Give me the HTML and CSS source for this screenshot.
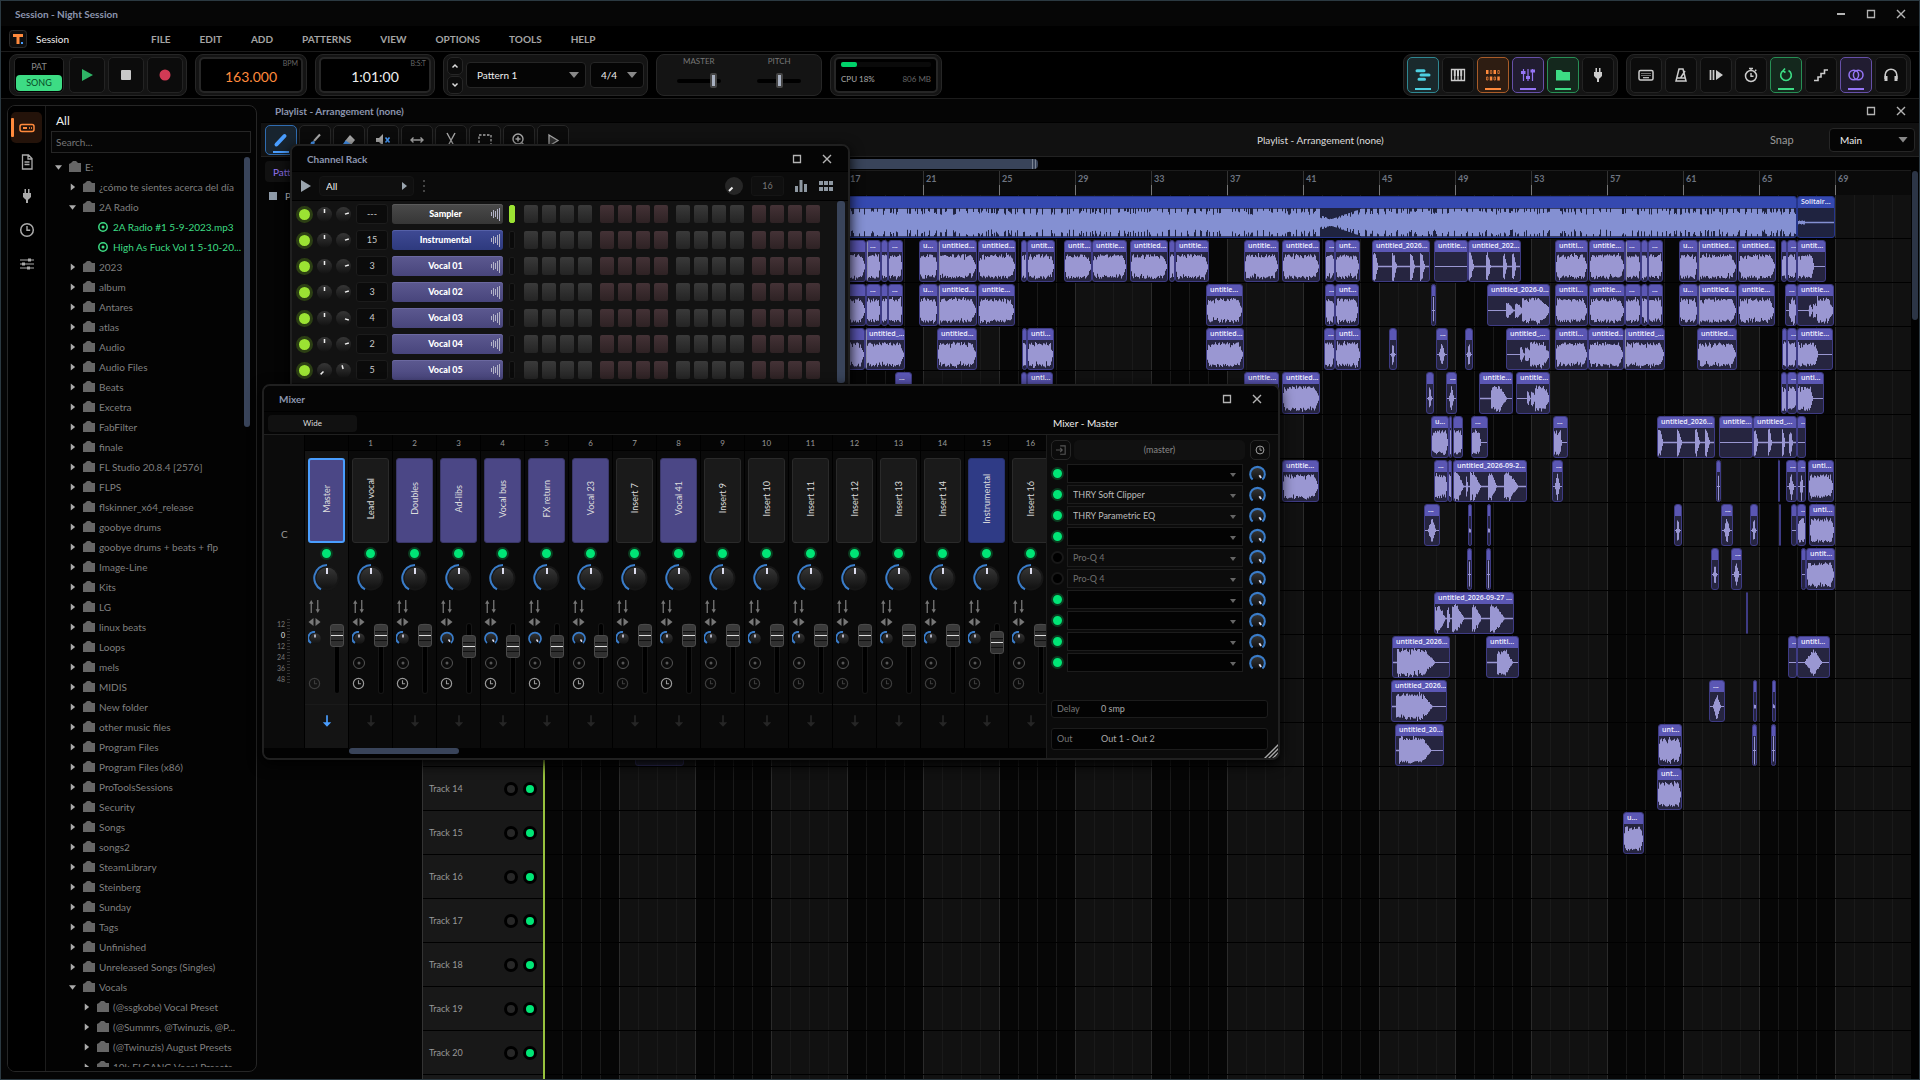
FILE: index.html
```html
<!DOCTYPE html>
<html lang="en">
<head>
<meta charset="utf-8">
<title>Session - Night Session</title>
<link rel="stylesheet" href="styles.css">
</head>
<body>
<svg class="sprite" aria-hidden="true">
  <symbol id="min" viewBox="0 0 12 12"><path d="M2 6h8" stroke="currentColor" stroke-width="2"/></symbol>
  <symbol id="max" viewBox="0 0 12 12"><path d="M2.5 2.5h7v7h-7z" fill="none" stroke="currentColor" stroke-width="1.3"/></symbol>
  <symbol id="close" viewBox="0 0 12 12"><path d="M2 2l8 8M10 2l-8 8" stroke="currentColor" stroke-width="1.4"/></symbol>
  <symbol id="folder" viewBox="0 0 12 12"><path d="M0 3l2-1 2-2h3l2 2h3v9H0z" fill="currentColor"/></symbol>
  <symbol id="right" viewBox="0 0 8 8"><path d="M2 0l5 4-5 4z" fill="currentColor"/></symbol>
  <symbol id="down" viewBox="0 0 8 8"><path d="M0 2h8L4 7z" fill="currentColor"/></symbol>
  <symbol id="disc" viewBox="0 0 12 12"><circle cx="6" cy="6" r="4.2" fill="none" stroke="currentColor" stroke-width="1.5"/><circle cx="6" cy="6" r="1.5" fill="currentColor"/></symbol>
  <symbol id="drive" viewBox="0 0 16 16"><rect x="1" y="4.500" width="14" height="7" rx="2" fill="none" stroke="currentColor" stroke-width="1.500"/><path d="M4 8h4M10 8h.8M12 8h.8" stroke="currentColor" stroke-width="1.800"/></symbol>
  <symbol id="file" viewBox="0 0 16 16"><path d="M3.500 1h6l3.500 3.500V15h-9.500zM9 1.500V5h3.500M5.500 8h5M5.500 10.500h5" fill="none" stroke="currentColor" stroke-width="1.300"/></symbol>
  <symbol id="plug" viewBox="0 0 16 16"><path d="M5.500 1h1.500v4h2V1h1.500v4h1.500v4l-2.500 2.500H9V15H7v-3.500h-.5L4 9V5h1.500z" fill="currentColor"/></symbol>
  <symbol id="clock" viewBox="0 0 16 16"><circle cx="8" cy="8" r="6.300" fill="none" stroke="currentColor" stroke-width="1.500"/><path d="M8 4v4.300h3.200" fill="none" stroke="currentColor" stroke-width="1.400"/></symbol>
  <symbol id="sliders" viewBox="0 0 16 16"><path d="M1 4h14M1 8h14M1 12h14" stroke="currentColor" stroke-width="1.200"/><path d="M9 2.500h3v3H9zM3 6.500h3v3H3zM8 10.500h3v3H8z" fill="currentColor"/></symbol>
  <symbol id="arrange" viewBox="0 0 16 16"><path d="M2 3.800h7M6 8h8M4 12.200h5.500" stroke="currentColor" stroke-width="3" stroke-linecap="round"/></symbol>
  <symbol id="piano" viewBox="0 0 16 16"><path d="M1.500 2.500h13v11h-13zM4.800 9v4.500M8 9v4.500M11.200 9v4.500" fill="none" stroke="currentColor" stroke-width="1.300"/><path d="M4.800 3v6M8 3v6M11.200 3v6" stroke="currentColor" stroke-width="2"/></symbol>
  <symbol id="seq" viewBox="0 0 16 16"><path d="M1 3h2.500v4H1zM8.500 3H11v4H8.500zM4.800 9.500h2.500v4H4.800zM12.300 9.500h2.500v4h-2.500z" fill="currentColor"/><path d="M5.300 3.500h1.500v3H5.300zM12.800 3.500h1.500v3h-1.500zM1.500 10H3v3H1.500zM9 10h1.500v3H9z" fill="none" stroke="currentColor" opacity=".7"/></symbol>
  <symbol id="faders" viewBox="0 0 16 16"><path d="M3.500 2v12M8 2v12M12.500 2v12" stroke="currentColor" stroke-width="1.200"/><path d="M1 4h4.500v3H1zM6 9h4v3H6zM10.500 2.500H15v3h-4.500z" fill="currentColor"/></symbol>
  <symbol id="browse" viewBox="0 0 16 16"><path d="M1 3h5l2 2h7v8.500H1z" fill="currentColor"/></symbol>
  <symbol id="keys" viewBox="0 0 16 16"><rect x="1" y="3.500" width="14" height="9.500" rx="1.500" fill="none" stroke="currentColor" stroke-width="1.500"/><path d="M3.500 6.500h9M3.500 8.500h9" stroke="currentColor" stroke-dasharray="1 1"/><path d="M5 10.700h6" stroke="currentColor" stroke-width="1.200"/></symbol>
  <symbol id="metro" viewBox="0 0 16 16"><path d="M6 2h4l3 12H3zM4 11h8M7.500 11L12 4" fill="none" stroke="currentColor" stroke-width="1.500"/></symbol>
  <symbol id="wait" viewBox="0 0 16 16"><path d="M2.500 3v10M5.500 3v10" stroke="currentColor" stroke-width="1.700"/><path d="M8 3l7 5-7 5z" fill="currentColor"/></symbol>
  <symbol id="timer" viewBox="0 0 16 16"><circle cx="8" cy="9" r="5.500" fill="none" stroke="currentColor" stroke-width="1.500"/><path d="M8 6v3.300h2.500M6 1.500h4M8 1.500v2M12 4l1.300-1.300" fill="none" stroke="currentColor" stroke-width="1.400"/></symbol>
  <symbol id="loop" viewBox="0 0 16 16"><path d="M10.500 3.500a5.300 5.300 0 1 1-5 0M7 1.500L5 3.800l2.500 1.700" fill="none" stroke="currentColor" stroke-width="1.600"/></symbol>
  <symbol id="stairs" viewBox="0 0 16 16"><path d="M1 13.500h4v-3.500h3V6.500h3.500V3H15" fill="none" stroke="currentColor" stroke-width="1.600"/></symbol>
  <symbol id="rings" viewBox="0 0 16 16"><circle cx="5.800" cy="8" r="4.800" fill="none" stroke="currentColor" stroke-width="1.500"/><circle cx="10.200" cy="8" r="4.800" fill="none" stroke="currentColor" stroke-width="1.500"/></symbol>
  <symbol id="phones" viewBox="0 0 16 16"><path d="M2.200 12V8a5.800 5.800 0 0 1 11.600 0v4" fill="none" stroke="currentColor" stroke-width="1.600"/><path d="M1.500 9h3v5h-3zM11.500 9h3v5h-3z" fill="currentColor"/></symbol>
  <symbol id="pencil" viewBox="0 0 16 16"><path d="M3.500 12.500L11.500 4" stroke="#4a9eff" stroke-width="4" stroke-linecap="round"/></symbol>
  <symbol id="brush" viewBox="0 0 16 16"><path d="M7 9l6-6.500" stroke="#aaa" stroke-width="2"/><path d="M3 14l1-4 3-1 1 2-2 2z" fill="#4a9eff"/></symbol>
  <symbol id="eraser" viewBox="0 0 16 16"><path d="M9 3l5 5-4 5-6-4z" fill="#aaa"/><path d="M4.500 8.500l6 4-1 2H4L2 12z" fill="#4a9eff"/></symbol>
  <symbol id="mute" viewBox="0 0 16 16"><path d="M1 6h3l4-4v12l-4-4H1z" fill="#aaa"/><path d="M10.500 5.500l4 5M14.500 5.500l-4 5" stroke="#4a9eff" stroke-width="1.600"/></symbol>
  <symbol id="slip" viewBox="0 0 16 16"><path d="M2 8h12M4.500 5.500L2 8l2.500 2.500M11.500 5.500L14 8l-2.500 2.500" fill="none" stroke="#aaa" stroke-width="1.400"/></symbol>
  <symbol id="slice" viewBox="0 0 16 16"><path d="M4 1l6.500 12M12 1L5.500 13" stroke="#aaa" stroke-width="1.400"/><circle cx="4" cy="13.500" r="1.500" fill="#aaa"/><circle cx="12" cy="13.500" r="1.500" fill="#aaa"/></symbol>
  <symbol id="marquee" viewBox="0 0 16 16"><path d="M2 3h12v10H2z" fill="none" stroke="#aaa" stroke-width="1.300" stroke-dasharray="2.500 1.500"/></symbol>
  <symbol id="lens" viewBox="0 0 16 16"><circle cx="7" cy="7" r="5" fill="none" stroke="#aaa" stroke-width="1.400"/><path d="M7 4.500v5M4.500 7h5M10.500 10.500L15 15" stroke="#aaa" stroke-width="1.500"/></symbol>
  <symbol id="listen" viewBox="0 0 16 16"><path d="M4 3l9 5.500-9 5.500z" fill="#333" stroke="#aaa" stroke-width="1.300"/></symbol>
  <symbol id="swap" viewBox="0 0 12 12"><path d="M3 2v10M9 0v10" stroke="currentColor" stroke-width="1.200"/><path d="M1 3.500L3 0l2 3.500zM7 8.500L9 12l2-3.500z" fill="currentColor"/></symbol>
  <symbol id="pan" viewBox="0 0 12 8"><path d="M5 0v8L0 4zM7 0v8l5-4z" fill="currentColor"/></symbol>
  <symbol id="rec" viewBox="0 0 14 14"><circle cx="7" cy="7" r="5.500" fill="none" stroke="currentColor"/><circle cx="7" cy="7" r="1.500" fill="currentColor"/></symbol>
  <symbol id="send" viewBox="0 0 12 16"><path d="M6 1v10" stroke="currentColor" stroke-width="2"/><path d="M1 9.500h10L6 15z" fill="currentColor"/></symbol>
  <symbol id="wave" viewBox="0 0 9 14"><path d="M.5 5v4M2.500 3v8M4.500 4v6M6.500 2v10M8.500 1v13" stroke="currentColor" stroke-width="1"/></symbol>
  <symbol id="dial" viewBox="0 0 28 28"><circle cx="14" cy="14" r="12.500" fill="#161616"/><circle cx="14" cy="14" r="10.500" fill="url(#kg)"/><path d="M8 25.400A13 13 0 0 1 14 1" fill="none" stroke="#3a7cc8" stroke-width="2"/><path d="M14 4v6" stroke="#dde" stroke-width="2"/></symbol>
  <symbol id="dialfull" viewBox="0 0 28 28"><circle cx="14" cy="14" r="10" fill="url(#kg)"/><path d="M6 24A12 12 0 1 1 22 24" fill="none" stroke="#3a7cc8" stroke-width="3.500"/><path d="M17 17l3 4.500" stroke="#dde" stroke-width="3"/></symbol>
  <symbol id="dialhalf" viewBox="0 0 28 28"><circle cx="15" cy="15" r="10.500" fill="url(#kg)"/><path d="M6 24A12 12 0 0 1 14 2" fill="none" stroke="#3a7cc8" stroke-width="4"/><path d="M14 7v6" stroke="#dde" stroke-width="3"/></symbol>
  <linearGradient id="kg" x2="0" y2="1"><stop stop-color="#363636"/><stop offset="1" stop-color="#121212"/></linearGradient>
</svg>

<div class="app">
  <header class="titlebar">
    <h1 class="wintitle">Session - Night Session</h1>
    <div class="winbtns">
      <button aria-label="Minimize"><svg><use href="#min"/></svg></button>
      <button aria-label="Maximize"><svg><use href="#max"/></svg></button>
      <button aria-label="Close"><svg><use href="#close"/></svg></button>
    </div>
  </header>

  <nav class="menubar">
    <svg class="logo" viewBox="0 0 18 18"><rect x=".5" y=".5" width="17" height="17" rx="3" fill="#0e0e0e" stroke="#2a2a2a"/><path d="M4 4h10v3h-3.500v7h-3V7H4z" fill="#ff8a3c"/><path d="M12 12h2v2h-2z" fill="#4a9eff"/></svg>
    <span class="project">Session</span>
    <button>FILE</button><button>EDIT</button><button>ADD</button><button>PATTERNS</button><button>VIEW</button><button>OPTIONS</button><button>TOOLS</button><button>HELP</button>
  </nav>

  <section class="transport">
    <div class="group">
      <div class="mode"><button>PAT</button><button class="on">SONG</button></div>
      <button class="key" aria-label="Play"><svg viewBox="0 0 16 16"><path d="M3 2l11 6-11 6z" fill="#2fb566"/></svg></button>
      <button class="key" aria-label="Stop"><svg viewBox="0 0 16 16"><rect x="3" y="3" width="10" height="10" rx="1" fill="#c8c8c8"/></svg></button>
      <button class="key" aria-label="Record"><svg viewBox="0 0 16 16"><circle cx="8" cy="8" r="5.500" fill="#d23a55"/></svg></button>
    </div>
    <div class="group"><div class="readout bpm"><small>BPM</small>163.000</div></div>
    <div class="group"><div class="readout time"><small>B:S:T</small>1:01:00</div></div>
    <div class="group pattern">
      <div class="updown"><button aria-label="Previous pattern"><svg viewBox="0 0 8 8"><path d="M1.500 5.500L4 3l2.500 2.500" fill="none" stroke="#ddd" stroke-width="1.500"/></svg></button><button aria-label="Next pattern"><svg viewBox="0 0 8 8"><path d="M1.500 2.500L4 5l2.500-2.500" fill="none" stroke="#ddd" stroke-width="1.500"/></svg></button></div>
      <div class="pick wide"><select aria-label="Pattern"><option>Pattern 1</option></select></div>
      <div class="pick sig"><select aria-label="Time signature"><option>4/4</option></select></div>
    </div>
    <div class="group levels">
      <label>MASTER<input type="range" min="0" max="100" value="90"></label>
      <label>PITCH<input type="range" min="0" max="100" value="50"></label>
    </div>
    <div class="group"><div class="cpu"><div class="load"><i></i></div><div class="stats"><span>CPU 18%</span><span class="mem">806 MB</span></div></div></div>
    <div class="group views">
      <button class="key cyan" aria-label="Playlist"><svg><use href="#arrange"/></svg></button>
      <button class="key" aria-label="Piano roll"><svg><use href="#piano"/></svg></button>
      <button class="key orange" aria-label="Channel rack"><svg><use href="#seq"/></svg></button>
      <button class="key purple" aria-label="Mixer"><svg><use href="#faders"/></svg></button>
      <button class="key green" aria-label="Browser"><svg><use href="#browse"/></svg></button>
      <button class="key" aria-label="Plugins"><svg><use href="#plug"/></svg></button>
    </div>
    <div class="group">
      <button class="key" aria-label="Typing keyboard"><svg><use href="#keys"/></svg></button>
      <button class="key" aria-label="Metronome"><svg><use href="#metro"/></svg></button>
      <button class="key" aria-label="Wait for input"><svg><use href="#wait"/></svg></button>
      <button class="key" aria-label="Countdown"><svg><use href="#timer"/></svg></button>
      <button class="key green" aria-label="Loop record"><svg><use href="#loop"/></svg></button>
      <button class="key" aria-label="Step edit"><svg><use href="#stairs"/></svg></button>
      <button class="key purple" aria-label="Overdub"><svg><use href="#rings"/></svg></button>
      <button class="key" aria-label="Monitor"><svg><use href="#phones"/></svg></button>
    </div>
  </section>

  <main class="desk">
    <aside class="browser">
      <div class="rail">
        <button class="on" aria-label="Drives"><svg><use href="#drive"/></svg></button>
        <button aria-label="Files"><svg><use href="#file"/></svg></button>
        <button aria-label="Plugins"><svg><use href="#plug"/></svg></button>
        <button aria-label="History"><svg><use href="#clock"/></svg></button>
        <button aria-label="Presets"><svg><use href="#sliders"/></svg></button>
      </div>
      <div class="files">
        <h2>All</h2>
        <input class="search" type="text" placeholder="Search..." aria-label="Search">
        <div class="treewrap"><ul class="tree" id="tree"></ul><div class="thumb"></div></div>
      </div>
    </aside>

    <section class="playlist">
      <header class="bar">
        <h2 class="wintitle">Playlist - Arrangement (none)</h2>
        <div class="winbtns"><button aria-label="Maximize"><svg><use href="#max"/></svg></button><button aria-label="Close"><svg><use href="#close"/></svg></button></div>
      </header>
      <div class="tools">
        <button class="on" aria-label="Draw"><svg><use href="#pencil"/></svg></button>
        <button aria-label="Paint"><svg><use href="#brush"/></svg></button>
        <button aria-label="Delete"><svg><use href="#eraser"/></svg></button>
        <button aria-label="Mute"><svg><use href="#mute"/></svg></button>
        <button aria-label="Slip"><svg><use href="#slip"/></svg></button>
        <button aria-label="Slice"><svg><use href="#slice"/></svg></button>
        <button aria-label="Select"><svg><use href="#marquee"/></svg></button>
        <button aria-label="Zoom"><svg><use href="#lens"/></svg></button>
        <button aria-label="Playback"><svg><use href="#listen"/></svg></button>
        <span class="caption">Playlist - Arrangement (none)</span>
        <label class="snap" for="snap">Snap</label>
        <div class="pick"><select id="snap"><option>Main</option></select></div>
      </div>
      <div class="arrange">
        <div class="picker"><button class="tab">Patterns</button><p><i></i>Pattern 1</p></div>
        <div class="heads" id="heads"></div>
        <div class="lanes">
          <div class="hscroll"><i></i></div>
          <div class="ruler" id="ruler"></div>
          <div class="grid" id="grid"><div class="playhead"></div></div>
        </div>
        <div class="vscroll"><i></i></div>
      </div>
    </section>
  </main>

  <section class="window rack">
    <header class="bar">
      <h2 class="wintitle">Channel Rack</h2>
      <div class="winbtns"><button aria-label="Maximize"><svg><use href="#max"/></svg></button><button aria-label="Close"><svg><use href="#close"/></svg></button></div>
    </header>
    <div class="racktools">
      <button class="play" aria-label="Play"><svg viewBox="0 0 10 12"><path d="M0 0l10 6-10 6z" fill="#9aa4ae"/></svg></button>
      <div class="pick side"><select aria-label="Filter"><option>All</option></select></div>
      <svg class="dots" viewBox="0 0 2 12"><path d="M0 0h2v2H0zM0 5h2v2H0zM0 10h2v2H0z" fill="#444"/></svg>
      <svg class="swing" viewBox="0 0 18 18"><circle cx="9" cy="9" r="9" fill="#262626"/><path d="M7.500 10.500L4 14" stroke="#eee" stroke-width="2"/></svg>
      <span class="count">16</span>
      <svg class="graph" viewBox="0 0 12 12"><path d="M0 6h3v6H0zM4.500 0h3v12h-3zM9 4h3v8H9z" fill="#8e98a2"/></svg>
      <svg class="graph" viewBox="0 0 14 12"><path d="M0 1h4v4H0zM5 1h4v4H5zM10 1h4v4h-4zM0 7h4v4H0zM5 7h4v4H5zM10 7h4v4h-4z" fill="#8e98a2"/></svg>
    </div>
    <div class="rackbody"><div id="channels"></div><div class="thumb"></div></div>
  </section>

  <section class="window mixer">
    <header class="bar">
      <h2 class="wintitle">Mixer</h2>
      <div class="winbtns"><button aria-label="Maximize"><svg><use href="#max"/></svg></button><button aria-label="Close"><svg><use href="#close"/></svg></button></div>
    </header>
    <div class="mixtools"><button>Wide</button><strong>Mixer - Master</strong></div>
    <div class="mixbody">
      <div class="console">
        <div class="striprow">
          <div class="scale"><b>C</b><ul><li>12</li><li class="zero">0</li><li>12</li><li>24</li><li>36</li><li>48</li></ul></div>
          <div class="strips" id="strips"></div>
        </div>
        <div class="mixscroll"><i></i></div>
      </div>
      <div class="inspector">
        <div class="source">
          <button aria-label="Input"><svg viewBox="0 0 12 12"><path d="M0 6h7M5 3.500L7.500 6 5 8.500M5 1h6v10H5" fill="none" stroke="#555" stroke-width="1.300"/></svg></button>
          <button class="input">(master)</button>
          <button aria-label="Latency"><svg><use href="#clock"/></svg></button>
        </div>
        <div id="slots"></div>
        <div class="field delay"><span>Delay</span>0 smp</div>
        <div class="field out"><span>Out</span>Out 1 - Out 2</div>
      </div>
    </div>
    <svg class="grip" viewBox="0 0 18 18"><path d="M1 18L18 1M5 18L18 5M9 18L18 9M13 18l5-5" stroke="#aaa" stroke-width="1.400"/></svg>
  </section>
</div>
<script src="app.js"></script>
</body>
</html>
```
FILE: styles.css
```css
* { box-sizing: border-box; }
body { margin: 0; background: #000; color: #ddd; font: 10px/14px Lato, "Open Sans", sans-serif; }
button, select, input { font: inherit; color: inherit; margin: 0; padding: 0; border: 0; background: none; }
h1, h2, p, ul { margin: 0; padding: 0; font: inherit; list-style: none; }
svg { display: block; width: 16px; height: 16px; }
.sprite { position: absolute; width: 0; height: 0; }
.app { position: relative; display: flex; flex-direction: column; height: 100vh; overflow: hidden; border: 1px solid #2b3941; background: #050505; }

.titlebar { display: flex; align-items: center; justify-content: space-between; height: 25px; flex: none; padding: 0 0 0 14px; background: #060606; }
.wintitle { font-size: 10px; font-weight: 700; color: #8c95ae; white-space: nowrap; }
.winbtns { display: flex; }
.winbtns button { width: 30px; height: 22px; display: grid; place-items: center; color: #b4b4b4; }
.winbtns svg { width: 12px; height: 12px; }
.titlebar .winbtns, .playlist .winbtns { padding-right: 3px; }

.menubar { display: flex; align-items: center; gap: 29px; height: 26px; flex: none; padding-left: 8px; background: #000; border-bottom: 1px solid #1c1c1c; color: #a4a4a4; }
.menubar button { font-size: 10px; font-weight: 700; }
.logo { width: 18px; height: 18px; margin-right: -20px; }
.project { width: 86px; font-size: 10px; color: #eee; }

.transport { display: flex; align-items: center; gap: 8px; height: 47px; flex: none; padding: 0 8px; background: #000; border-bottom: 1px solid #1c1c1c; }
.group { display: flex; align-items: center; gap: 3px; height: 42px; padding: 0 3px; border: 1px solid #262626; border-radius: 8px; background: #141414; }
.mode { width: 50px; height: 36px; margin: 0 2px 0 1px; padding: 1px; display: flex; flex-direction: column; border: 1px solid #262626; border-radius: 5px; background: #000; font-size: 9px; color: #888; text-align: center; }
.mode button { flex: 1; }
.mode .on { background: #3ddc84; color: #064a24; border-radius: 4px; }
.key { position: relative; width: 32px; height: 36px; display: grid; place-items: center; border: 1px solid #232323; border-radius: 5px; background: #0c0c0c; color: #ccc; }
.transport .group:first-child .key { width: 36px; }
.key.cyan { color: #4dd0e1; background: #1a292c; border-color: #2f8792; }
.key.orange { color: #ff8a3c; background: #2e1d12; border-color: #a95c28; }
.key.purple { color: #9575f5; background: #211c31; border-color: #6650a8; }
.key.green { color: #3ddc84; background: #14281d; border-color: #278f55; }
.key.cyan::after, .key.orange::after, .key.purple::after, .key.green::after { content: ""; position: absolute; left: 7px; right: 7px; bottom: 2px; height: 2px; background: currentColor; }
.readout { position: relative; height: 36px; width: 104px; border: 2px solid #262626; border-radius: 5px; background: #000; font-size: 14px; line-height: 35px; text-align: center; color: #eee; }
.readout.time { width: 112px; }
.readout.bpm { color: #ff8a3c; }
.readout small { position: absolute; right: 3px; top: 0; font-size: 7px; line-height: 8px; color: #666; }
.updown { display: flex; flex-direction: column; gap: 1px; }
.updown button { width: 16px; height: 18px; display: grid; place-items: center; border: 1px solid #262626; border-radius: 5px; background: #0c0c0c; }
.updown svg { width: 8px; height: 8px; }
.pick { position: relative; height: 26px; border: 1px solid #262626; border-radius: 4px; background: #050505; }
.pick select { appearance: none; width: 100%; height: 100%; padding-left: 10px; font-size: 10px; color: #eee; }
.pick::after { content: ""; position: absolute; right: 6px; top: calc(50% - 3px); width: 10px; height: 6px; background: #888; clip-path: polygon(0 0, 100% 0, 50% 100%); pointer-events: none; }
.pick.wide { width: 120px; }
.pick.sig { width: 54px; margin-left: 1px; }
.levels { width: 166px; align-items: flex-start; justify-content: space-around; }
.levels label { display: flex; flex-direction: column; align-items: center; gap: 6px; font-size: 8px; line-height: 12px; color: #777; }
.levels input { appearance: none; width: 44px; height: 16px; }
.levels input::-webkit-slider-runnable-track { height: 4px; border-radius: 2px; background: #000; }
.levels input::-webkit-slider-thumb { appearance: none; width: 7px; height: 15px; margin-top: -6px; border: 2px solid #444; border-radius: 2px; background: #a8b0c0; }
.cpu { width: 104px; height: 36px; padding: 3px 5px; border: 2px solid #262626; border-radius: 5px; background: #000; font-size: 8px; }
.load { height: 5px; margin-bottom: 5px; border-radius: 2px; background: #0a0a0a; }
.load i { display: block; width: 18%; height: 5px; border-radius: 2px; background: #00d26a; }
.stats { display: flex; justify-content: space-between; color: #aaa; white-space: nowrap; }
.mem { color: #666; }
.views { margin-left: auto; }

.desk { flex: 1; min-height: 0; display: flex; }
.browser { display: flex; width: 250px; margin: 6px 4px 7px 6px; border: 1px solid #262626; border-radius: 8px; background: #030303; overflow: hidden; }
.rail { width: 38px; padding: 6px 3px; border-right: 1px solid #1c1c1c; background: #000; display: flex; flex-direction: column; gap: 3px; color: #aaa; }
.rail button { position: relative; width: 31px; height: 31px; display: grid; place-items: center; border-radius: 5px; }
.rail .on { background: #24130a; color: #ff8a3c; }
.rail .on::before { content: ""; position: absolute; left: 0; top: 6px; width: 3px; height: 19px; border-radius: 1px; background: #ff8a3c; }
.files { flex: 1; min-width: 0; padding: 8px 5px 4px; display: flex; flex-direction: column; }
.files h2 { height: 17px; padding-left: 5px; font-size: 12px; color: #eee; }
.search { height: 22px; padding: 0 4px; border: 1px solid #262626; background: #060606; color: #aaa; }
.search::placeholder { color: #777; }
.treewrap { position: relative; flex: 1; min-height: 0; margin-top: 4px; overflow: hidden; }
.tree li { display: flex; align-items: center; height: 20px; padding-left: 4px; color: #808080; white-space: nowrap; }
.tree .d1 { padding-left: 18px; }
.tree .d2 { padding-left: 32px; }
.tree .file { padding-left: 46px; color: #3ddc84; }
.tree svg { width: 7px; height: 8px; margin-right: 7px; color: #aaa; flex: none; }
.tree svg.ic { width: 12px; height: 12px; margin-right: 4px; color: #666; }
.tree .file svg.ic { color: #3ddc84; }
.treewrap .thumb { position: absolute; right: 1px; top: 0; width: 6px; height: 270px; border-radius: 3px; background: #39445a; }

.playlist { flex: 1; min-width: 0; display: flex; flex-direction: column; }
.bar { display: flex; align-items: center; justify-content: space-between; height: 24px; flex: none; padding-left: 14px; background: #050505; border-bottom: 1px solid #000; }
.tools { display: flex; align-items: center; gap: 2px; height: 34px; flex: none; padding: 0 4px; background: #111; border-bottom: 1px solid #222; }
.tools button { position: relative; width: 32px; height: 30px; display: grid; place-items: center; border: 1px solid #262626; border-radius: 5px; background: #0b0b0b; }
.tools .on { background: #18242f; border-color: #2f6cb0; }
.tools .on::after { content: ""; position: absolute; left: 7px; right: 7px; bottom: 1px; height: 2px; background: #4a9eff; }
.caption { margin-left: auto; width: 128px; white-space: nowrap; color: #ddd; }
.snap { width: 57px; margin-left: 383px; font-size: 11px; color: #999; }
.tools .pick { width: 86px; height: 24px; }
.arrange { flex: 1; min-height: 0; display: flex; }
.picker { width: 161px; padding: 4px; }
.picker .tab { height: 21px; padding: 0 8px; border-radius: 4px; background: #111; color: #9575f5; }
.picker p { display: flex; gap: 8px; align-items: center; padding: 7px 4px; }
.picker i { width: 8px; height: 8px; background: #8e9aa8; }
.heads { width: 121px; padding-top: 38px; border-left: 1px solid #333; overflow: hidden; }
.head { display: flex; align-items: center; gap: 5px; height: 44px; padding: 0 6px; background: #181818; border-bottom: 1px solid #000; font-size: 9px; color: #999; }
.head span { flex: 1; }
.head input { appearance: none; width: 14px; height: 14px; border: 3px solid #000; border-radius: 50%; background: #282828; }
.head input:checked { background: #00e676; }
.lanes { flex: 1; min-width: 0; display: flex; flex-direction: column; overflow: hidden; }
.hscroll { height: 14px; flex: none; padding: 2px 0; background: #020202; border-bottom: 1px solid #1c1c1c; }
.hscroll i { display: block; width: 495px; height: 10px; border-radius: 4px; background: linear-gradient(90deg, transparent 489px, #7a8494 489px 490px, transparent 490px 492px, #7a8494 492px 493px, transparent 493px) #39445a; }
.ruler { display: flex; height: 24px; flex: none; background: #0a0a0a; }
.ruler span { width: 76px; flex: none; padding-left: 3px; color: #6d7480; font-size: 9px; font-weight: 700; line-height: 15px; background: linear-gradient(#333 14px, #777 14px) 0 0 / 1px 100% no-repeat; }
.grid { position: relative; isolation: isolate; flex: 1; overflow: hidden; background:
  repeating-linear-gradient(180deg, transparent 0 43px, #000 43px 44px),
  repeating-linear-gradient(90deg, #2b2b2b 0 1px, transparent 1px 76px),
  repeating-linear-gradient(90deg, #1a1a1a 0 1px, transparent 1px 19px),
  repeating-linear-gradient(90deg, #060606 0 76px, #111 76px 152px); }
.playhead { position: absolute; z-index: 2; left: 0; top: 0; bottom: 0; width: 2px; background: #97c23d; }
.clip { position: absolute; height: 42px; overflow: hidden; border: 1px solid #3e3b84; border-radius: 3px; background: #262540; color: #9a97d2; }
.clip b { display: block; height: 12px; margin: -1px -1px 0; padding-left: 4px; background: #5b57b4; color: #f2f2ff; font: 600 7px/12px "Open Sans", sans-serif; white-space: nowrap; overflow: hidden; }
.clip svg { width: auto; height: 29px; }
.clip.blue { border-color: #26368c; background: #1f2340; color: #8490d2; }
.clip.blue b { background: #3549b0; }
.clip.cross::after { content: ""; position: absolute; left: -1px; top: 0; bottom: 0; width: 2px; background: #8f8fa8; }
.clip.dim { opacity: .6; }
.vscroll { width: 8px; padding: 14px 1px 0; background: #020202; }
.vscroll i { display: block; height: 149px; border-radius: 3px; background: #2c3546; }

.window { position: absolute; border: 2px solid #202020; border-radius: 8px; background: #0b0b0b; overflow: hidden; box-shadow: 0 4px 14px #000; }
.window .bar { height: 26px; padding-left: 15px; }
.rack { left: 289px; top: 143px; width: 560px; height: 300px; }
.rack .winbtns { padding-right: 6px; }
.racktools { display: flex; align-items: center; height: 29px; padding: 0 15px 0 9px; border-bottom: 1px solid #000; }
.play svg { width: 10px; height: 12px; }
.pick.side { width: 95px; height: 20px; margin-left: 8px; border-color: #151515; background: #0f0f0f; }
.pick.side select { padding-left: 6px; }
.pick.side::after { width: 5px; height: 8px; top: calc(50% - 4px); background: #9aa4ae; clip-path: polygon(0 0, 100% 50%, 0 100%); }
.dots { width: 2px; height: 12px; margin-left: 9px; }
.swing { width: 18px; height: 18px; margin-left: auto; }
.count { width: 33px; height: 20px; margin: 0 10px 0 8px; border: 1px solid #151515; border-radius: 3px; background: #0f0f0f; color: #777; font-size: 9px; text-align: center; line-height: 18px; }
.graph { width: 14px; height: 12px; margin-right: 11px; }
.graph:last-child { margin-right: 0; }
.rackbody { position: relative; background: #121212; }
.rackbody .thumb { position: absolute; right: 3px; top: 0; bottom: 0; width: 8px; border-radius: 3px; background: #39445a; }
.channel { display: flex; align-items: center; height: 26px; padding-left: 4px; }
.channel input { appearance: none; width: 17px; height: 17px; border: 3px solid #2c3f14; border-radius: 50%; background: #9be233; }
.knob { width: 15px; height: 15px; margin-left: 4px; }
.num { width: 32px; height: 20px; margin: 0 4px 0 5px; border: 1px solid #1c1c1c; border-radius: 3px; background: #0b0b0b; color: #ccc; font-size: 9px; line-height: 18px; text-align: center; }
.name { display: flex; align-items: center; width: 111px; height: 20px; padding: 0 3px; border-radius: 3px; background: linear-gradient(#5c5990, #48457c); box-shadow: inset 0 1px #6b68a0; color: #fff; font-size: 9px; font-weight: 900; }
.name span { flex: 1; padding-left: 5px; }
.name.gray { background: linear-gradient(#4a4a4a, #363636); box-shadow: inset 0 1px #5a5a5a; }
.name.blue { background: linear-gradient(#3f4a94, #2e3a7e); box-shadow: inset 0 1px #5560a8; }
.name svg { width: 9px; height: 14px; color: #b4b4c8; }
.meter { width: 6px; height: 18px; margin: 0 9px 0 6px; border: 1px solid #1c1c1c; border-radius: 2px; background: #0a0a0a; }
.meter.hot { background: #9be233; border-color: #9be233; }
.steps { display: flex; gap: 8px; }
.steps div { display: flex; gap: 4px; }
.steps button { width: 14px; height: 18px; border-radius: 2px; background: linear-gradient(#3a3a3a, #242424); }
.steps div:nth-child(even) button { background: linear-gradient(#443236, #2e2224); }

.mixer { left: 261px; top: 383px; width: 1018px; height: 376px; display: flex; flex-direction: column; }
.mixer .winbtns { padding-right: 6px; }
.mixtools { display: flex; align-items: center; justify-content: space-between; height: 23px; flex: none; padding: 0 160px 0 4px; border-bottom: 1px solid #202020; background: #050505; }
.mixtools button { width: 89px; height: 17px; border-radius: 4px; background: #111; font-size: 8px; }
.mixtools strong { width: 65px; font-size: 10px; font-weight: 400; color: #eee; white-space: nowrap; }
.mixbody { flex: 1; min-height: 0; display: flex; }
.console { flex: 1; min-width: 0; display: flex; flex-direction: column; }
.striprow { flex: 1; min-height: 0; display: flex; }
.scale { width: 41px; flex: none; border-right: 1px solid #000; }
.scale b { display: block; margin: 92px 0 0 17px; font-weight: 400; color: #999; }
.scale ul { margin: 78px 14px 0 0; padding-right: 5px; text-align: right; font-size: 7px; line-height: 11px; color: #777; background: repeating-linear-gradient(#333 0 1px, transparent 1px 3px) right / 3px 100% no-repeat; }
.scale .zero { color: #eee; }
.strips { flex: 1; min-width: 0; display: flex; overflow: hidden; }
.strip { width: 44px; flex: none; display: flex; flex-direction: column; border-right: 1px solid #000; background: #0a0a0a; }
.strip.sel { background: #141414; }
.strip header { height: 16px; background: #050505; border-bottom: 1px solid #000; font-size: 8px; line-height: 17px; color: #999; text-align: center; }
.strip .pad { width: 37px; height: 85px; margin: 7px 3px 4px; border: 1px solid #2a2a2a; border-radius: 3px; background: #1a1a1a; color: #ddd; font-size: 9px; }
.pad span { writing-mode: vertical-rl; transform: rotate(180deg); white-space: nowrap; line-height: 12px; }
.strip .violet { background: #4b4786; border-color: #3a3768; }
.strip .blue { background: #2f3b86; border-color: #27326f; }
.strip.sel .pad { border: 2px solid #4a9eff; }
.led { appearance: none; display: block; width: 13px; height: 13px; margin: 0 auto; border: 2px solid #0b3c20; border-radius: 50%; background: #00e676; }
.led:not(:checked) { background: #000; border-color: #181818; }
.strip .led { margin-bottom: 4px; }
.strip .big { width: 28px; height: 28px; margin: 0 auto; }
.lower { display: flex; height: 113px; padding: 8px 3px 0; border-bottom: 1px solid #1a1a1a; }
.bits { width: 13px; display: flex; flex-direction: column; align-items: center; color: #777; }
.bits svg { width: 13px; height: 13px; margin-bottom: 5px; }
.bits .lr { height: 8px; }
.bits .mini { margin-bottom: 11px; width: 14px; height: 14px; }
.bits .dot { color: #555; margin-bottom: 7px; width: 14px; height: 14px; }
.bits .dot.none { visibility: hidden; }
.bits .off { color: #3c3c3c; }
.bits .lit { color: #999; }
.fader { appearance: none; writing-mode: vertical-lr; direction: rtl; width: 14px; height: 69px; margin: 24px 0 0 9px; }
.fader::-webkit-slider-runnable-track { width: 4px; border-radius: 2px; background: #000; box-shadow: 0 0 0 1px #161616; }
.fader::-webkit-slider-thumb { appearance: none; width: 14px; height: 23px; margin-left: -5px; border: 1px solid #4a4a4a; border-radius: 3px; background: linear-gradient(#3a3a3a 0 6px, #111 6px 7px, #2c2c2c 7px 10px, #ddd 10px 11px, #2c2c2c 11px 15px, #111 15px 16px, #303030 16px); }
.send { width: 10px; height: 14px; margin: 9px auto 0; color: #262626; }
.sel .send { color: #4a9eff; }
.mixscroll { height: 10px; flex: none; background: #020202; padding-left: 85px; }
.mixscroll i { display: block; width: 110px; height: 6px; border-radius: 3px; background: #39445a; }
.inspector { width: 232px; flex: none; padding: 5px 8px 0 4px; border-left: 1px solid #1c1c1c; }
.source { display: flex; gap: 3px; margin-bottom: 4px; }
.source button { width: 20px; height: 20px; display: grid; place-items: center; border: 1px solid #262626; border-radius: 5px; color: #aaa; }
.source svg { width: 10px; height: 10px; }
.source .input { flex: 1; margin-right: 2px; border: 0; background: #111; color: #888; font-size: 9px; }
.slot { display: flex; align-items: center; height: 19px; margin-bottom: 2px; }
.slot .led { margin: 0 3px 0 0; flex: none; }
.slot .pick { flex: 1; height: 19px; border-radius: 0; border-color: #1c1c1c; background: #030303; }
.slot .pick.used { background: #0c0c0c; }
.slot .pick select { padding-left: 5px; font-size: 9px; color: #bbb; }
.slot .pick.bypass select { color: #707070; }
.slot .pick::after { width: 6px; height: 4px; right: 6px; top: 8px; background: #666; }
.slot svg { width: 17px; height: 17px; margin: 0 4px 0 6px; }
.field { display: flex; align-items: center; height: 18px; margin-right: 2px; padding-left: 5px; border: 1px solid #1c1c1c; border-radius: 3px; background: #030303; color: #aaa; font-size: 9px; }
.field span { width: 44px; color: #777; }
.delay { margin-top: 28px; }
.out { height: 22px; margin-top: 10px; }
.grip { position: absolute; right: -2px; bottom: -2px; width: 18px; height: 18px; }
```
FILE: app.js
```js
const $ = id => document.getElementById(id);
const use = (name, cls = '') => `<svg class="${cls}"><use href="#${name}"/></svg>`;

/* File browser: leading digit is the depth, "v" marks an open folder, "f" a file */
const tree = `0v E:|1  ¿cómo te sientes acerca del día|1v 2A Radio|2f 2A Radio #1 5-9-2023.mp3|2f High As Fuck Vol 1 5-10-20...|1  2023|1  album|1  Antares|1  atlas|1  Audio|1  Audio Files|1  Beats|1  Excetra|1  FabFilter|1  finale|1  FL Studio 20.8.4 [2576]|1  FLPS|1  flskinner_x64_release|1  goobye drums|1  goobye drums + beats + flp|1  Image-Line|1  Kits|1  LG|1  linux beats|1  Loops|1  mels|1  MIDIS|1  New folder|1  other music files|1  Program Files|1  Program Files (x86)|1  ProToolsSessions|1  Security|1  Songs|1  songs2|1  SteamLibrary|1  Steinberg|1  Sunday|1  Tags|1  Unfinished|1  Unreleased Songs (Singles)|1v Vocals|2  (@ssgkobe) Vocal Preset|2  (@Summrs, @Twinuzis, @P...|2  (@Twinuzis) August Presets|2  10k FLGANG Vocal Presets`.split('|');
$('tree').innerHTML = tree.map(t => {
  const kind = t[1], label = t.slice(3);
  if (kind === 'f') return `<li class="file">${use('disc', 'ic')}<span>${label}</span></li>`;
  return `<li class="d${t[0]}">${use(kind === 'v' ? 'down' : 'right')}${use('folder', 'ic')}<span>${label}</span></li>`;
}).join('');

/* Track headers and ruler */
let heads = '';
for (let i = 1; i <= 20; i++) heads += `<div class="head"><span>Track ${i}</span><input type="checkbox" aria-label="Arm track ${i}"><input type="checkbox" checked aria-label="Enable track ${i}"></div>`;
$('heads').innerHTML = heads + '<div class="head"></div>';
let ruler = '';
for (let b = 1; b <= 69; b += 4) ruler += `<span>${b}</span>`;
$('ruler').innerHTML = ruler;

/* Clips per track: start, end, label, waveform shape (+ "|" for a crossfade) */
const T = 'untitled...', S = 'untitle...', U = 'untit...', L = 'untitl...', D = '...';
const tracks = [
  [[543,1797,'','main'],[1797,1835,'Solitair...','tail']],
  [[829,866,'e...','f'],[866,881,D,'f|'],[881,888,'','f'],[888,903,D,'f'],[919,938,'u...','f'],[938,977,T,'f|'],[978,1016,T,'f'],[1021,1027,'','f'],[1027,1055,U,'f'],[1064,1092,U,'f'],[1092,1127,S,'f'],[1130,1168,T,'f'],[1169,1175,'','f'],[1175,1209,S,'f'],[1244,1279,S,'f'],[1282,1320,T,'f'],[1325,1335,D,'f'],[1335,1360,'unt...','f'],[1372,1430,'untitled_2026...','b'],[1434,1468,S,'n'],[1468,1521,'untitled_202...','b'],[1555,1588,L,'f'],[1589,1625,S,'f'],[1625,1641,D,'f|'],[1641,1648,'','f'],[1648,1663,D,'f'],[1679,1698,'u...','f'],[1698,1737,T,'f|'],[1738,1776,T,'f'],[1781,1787,'','f'],[1787,1797,D,'f'],[1797,1826,U,'e']],
  [[829,866,'ed...','f'],[866,881,D,'f'],[881,888,'','f'],[888,903,D,'f'],[919,938,'u...','f'],[938,977,T,'f|'],[978,1015,S,'f'],[1206,1243,S,'f'],[1325,1335,D,'f'],[1335,1359,'unt...','f'],[1431,1436,'','s'],[1487,1550,'untitled_2026-0...','l'],[1555,1588,L,'f'],[1589,1625,S,'f'],[1625,1641,D,'f'],[1641,1648,'','f'],[1648,1663,D,'f'],[1679,1698,'u...','f'],[1698,1737,T,'f|'],[1738,1775,S,'f'],[1785,1797,D,'l'],[1797,1834,S,'l']],
  [[829,865,'ed...','f'],[865,905,'untitled_...','f|'],[937,977,T,'f'],[1022,1027,'','f'],[1027,1054,'unti...','f'],[1206,1244,T,'f'],[1324,1335,D,'f'],[1335,1361,'unti...','f'],[1389,1397,'','s'],[1436,1448,D,'s'],[1465,1473,'','s'],[1506,1550,'untitled_...','l'],[1555,1588,L,'f'],[1588,1624,T,'f'],[1624,1665,'untitled_...','f|'],[1697,1737,T,'f'],[1782,1787,'','f'],[1787,1797,D,'f'],[1797,1833,S,'e']],
  [[895,912,D,'f'],[1021,1027,'','f'],[1027,1053,'unti...','f'],[1244,1279,S,'f'],[1282,1320,T,'f'],[1426,1434,'','s'],[1446,1457,D,'s'],[1479,1513,S,'m'],[1516,1550,S,'l'],[1781,1787,'','f'],[1787,1797,D,'f'],[1797,1824,'unti...','e']],
  [[1431,1449,'u...','f'],[1449,1452,'','f'],[1453,1463,'','f'],[1471,1488,D,'e'],[1553,1568,D,'e'],[1657,1715,'untitled_2026...','b'],[1719,1753,S,'n'],[1753,1797,'untitled_...','b'],[1797,1806,D,'n']],
  [[1282,1319,S,'f'],[1434,1448,D,'f'],[1448,1452,'','f'],[1453,1527,'untitled_2026-09-2...','g'],[1552,1563,D,'s'],[1716,1721,'','s'],[1778,1779,'','n'],[1786,1797,D,'s'],[1797,1806,D,'s'],[1808,1834,'unti...','f']],
  [[1424,1440,D,'s'],[1468,1472,'','s'],[1487,1491,'','s'],[1674,1682,'','s'],[1721,1733,D,'s'],[1750,1758,'','s'],[1779,1780,'','n'],[1791,1797,'','n'],[1797,1806,D,'f'],[1809,1835,'unti...','f']],
  [[1467,1472,'','s'],[1486,1491,'','s'],[1711,1719,'','s'],[1731,1742,D,'s'],[1801,1806,'','n'],[1806,1835,U,'f']],
  [[1434,1514,'untitled_2026-09-27 ...','g'],[1746,1748,'','n']],
  [[1392,1450,'untitled_2026...','h'],[1486,1519,L,'m'],[1788,1797,D,'n'],[1797,1830,L,'s']],
  [[1391,1447,'untitled_2026...','h'],[1709,1725,D,'s'],[1753,1757,'','s'],[1772,1776,'','s']],
  [[635,684,'','dim'],[1395,1444,'untitled_20...','h'],[1658,1682,'unt...','f'],[1752,1757,'','s'],[1771,1776,'','s']],
  [[1657,1682,'unt...','f']],
  [[1623,1644,'u...','f']]
];

let seed = 7;
const rnd = () => (seed = (seed * 16807) % 2147483647) / 2147483647;
const within = (t, a, b) => t > a && t < b ? Math.min(1, (b - t) / (b - a) * 1.6) : 0;
const shapes = {
  f: t => Math.min(.85, t * 14 + .2, (1 - t) * 7 + .1),
  e: t => t < .5 ? .85 : Math.max(.04, .85 - (t - .5) * 8),
  l: t => t < .3 ? .04 : t < .55 ? .5 * within(t, .3, .42) + .5 * within(t, .44, .58) + .05 : Math.min(.9, (1 - t) * 5 + .2),
  m: t => t < .33 ? .05 : Math.max(.04, Math.min(.9, (.85 - t) * 4)),
  s: t => Math.max(.04, 1 - Math.abs(t - .5) * 3.4),
  n: () => .04,
  b: t => Math.max(.05, within(t, 0, .1), within(t, .34, .43), within(t, .66, .75), within(t, .84, .93)),
  g: t => Math.max(.06, within(t, 0, .14), within(t, .16, .2) * .7, within(t, .22, .38), within(t, .47, .6), within(t, .7, .9)),
  h: t => t < .07 ? .05 : Math.max(.04, Math.min(.95, (.76 - t) * 5)),
  tail: t => t < .2 ? .14 : .05,
  dim: () => .5
};
function wavePath(w, kind) {
  const top = [], bottom = [];
  const put = (x, a, b) => {
    const y1 = (14.5 - a * 14).toFixed(1), y2 = (14.5 + b * 14).toFixed(1);
    top.push(`${x} ${y1}L${x + 1} ${y1}`);
    bottom.unshift(`${x + 1} ${y2}L${x} ${y2}`);
  };
  for (let x = 0; x < w; x++) {
    if (kind === 'main') {
      const p = x + 543;
      const notch = x % 19 % 6 > 3 && rnd() < .75 || rnd() < .15;
      const lull = p > 1318 && p < 1362 ? Math.min(1, .25 + Math.abs(p - 1330) / 40) : 1;
      put(x, (notch ? .55 + rnd() * .3 : .98) * lull, (notch ? .5 + rnd() * .4 : .98) * lull);
    } else {
      const e = shapes[kind]((x + .5) / w);
      const jag = () => e < .1 ? 1 : rnd() < .15 ? .55 + rnd() * .6 : .76 + rnd() * .28;
      put(x, e * jag(), e * jag());
    }
  }
  return `M${top.join('L')}L${bottom.join('L')}z`;
}
let clips = '';
tracks.forEach((row, r) => row.forEach(([a, b, label, kind]) => {
  const w = b - a, cross = kind.endsWith('|') ? ' cross' : '', k = kind.replace('|', '');
  const cls = (r === 0 ? ' blue' : '') + cross + (k === 'dim' ? ' dim' : '');
  const inner = Math.max(1, w - 2);
  clips += `<div class="clip${cls}" style="left:${a - 543}px;top:${r * 44 + 1}px;width:${w}px"><b>${label}</b><svg viewBox="0 0 ${inner} 29" preserveAspectRatio="none"><path fill="currentColor" d="${wavePath(inner, k)}"/></svg></div>`;
}));
$('grid').insertAdjacentHTML('beforeend', clips);

/* Channel rack */
const knob = deg => `<svg class="knob" viewBox="0 0 15 15"><circle cx="7.500" cy="7.500" r="7.500" fill="url(#kg)"/><path d="M7.500 2v4" stroke="#eee" stroke-width="1.500" transform="rotate(${deg} 7.500 7.500)"/></svg>`;
const group = '<div>' + '<button aria-label="Step"></button>'.repeat(4) + '</div>';
$('channels').innerHTML = [['---','Sampler','gray'],['15','Instrumental','blue'],['3','Vocal 01'],['3','Vocal 02'],['4','Vocal 03'],['2','Vocal 04'],['5','Vocal 05']].map(([n, name, c = ''], i) =>
  `<div class="channel"><input type="checkbox" checked aria-label="${name} on">${knob(i === 6 ? 225 : 0)}${knob(i === 6 ? -15 : i === 4 ? 105 : 75)}<span class="num">${n}</span><button class="name ${c}"><span>${name}</span>${use('wave')}</button><span class="meter${i ? '' : ' hot'}"></span><div class="steps">${group.repeat(4)}</div></div>`).join('');

/* Mixer strips */
const names = ['Master','Lead vocal','Doubles','Ad-libs','Vocal bus','FX return','Vocal 23','Insert 7','Vocal 41','Insert 9','Insert 10','Insert 11','Insert 12','Insert 13','Insert 14','Instrumental','Insert 16'];
const violet = [0, 2, 3, 4, 5, 6, 8];
$('strips').innerHTML = names.map((n, i) => {
  const low = i > 2 && i < 7;
  const value = low ? 76 : i === 15 ? 85 : 100;
  return `<div class="strip${i ? '' : ' sel'}"><header>${i || ''}</header><button class="pad ${violet.includes(i) ? 'violet' : i === 15 ? 'blue' : ''}"><span>${n}</span></button><input class="led" type="checkbox" checked aria-label="${n} on">${use('dial', 'big')}<div class="lower"><div class="bits">${use('swap')}${use('pan', 'lr')}${use(low ? 'dialfull' : 'dialhalf', 'mini')}${use('rec', i ? 'dot' : 'dot none')}${use('clock', i && i < 9 && i !== 7 ? 'lit' : 'off')}</div><input class="fader" type="range" min="0" max="100" value="${value}" aria-label="${n} level"></div>${use('send', 'send')}</div>`;
}).join('');

/* Effect slots of the selected insert */
$('slots').innerHTML = ['','THRY Soft Clipper','THRY Parametric EQ','','-Pro-Q 4','-Pro-Q 4','','','',''].map((s, i) => {
  const off = s[0] === '-', name = off ? s.slice(1) : s;
  return `<div class="slot"><input class="led" type="checkbox" ${off ? '' : 'checked'} aria-label="Slot ${i + 1} on"><div class="pick${s ? ' used' : ''}${off ? ' bypass' : ''}"><select aria-label="Slot ${i + 1}"><option>${name}</option></select></div>${use('dialfull')}</div>`;
}).join('');
```
